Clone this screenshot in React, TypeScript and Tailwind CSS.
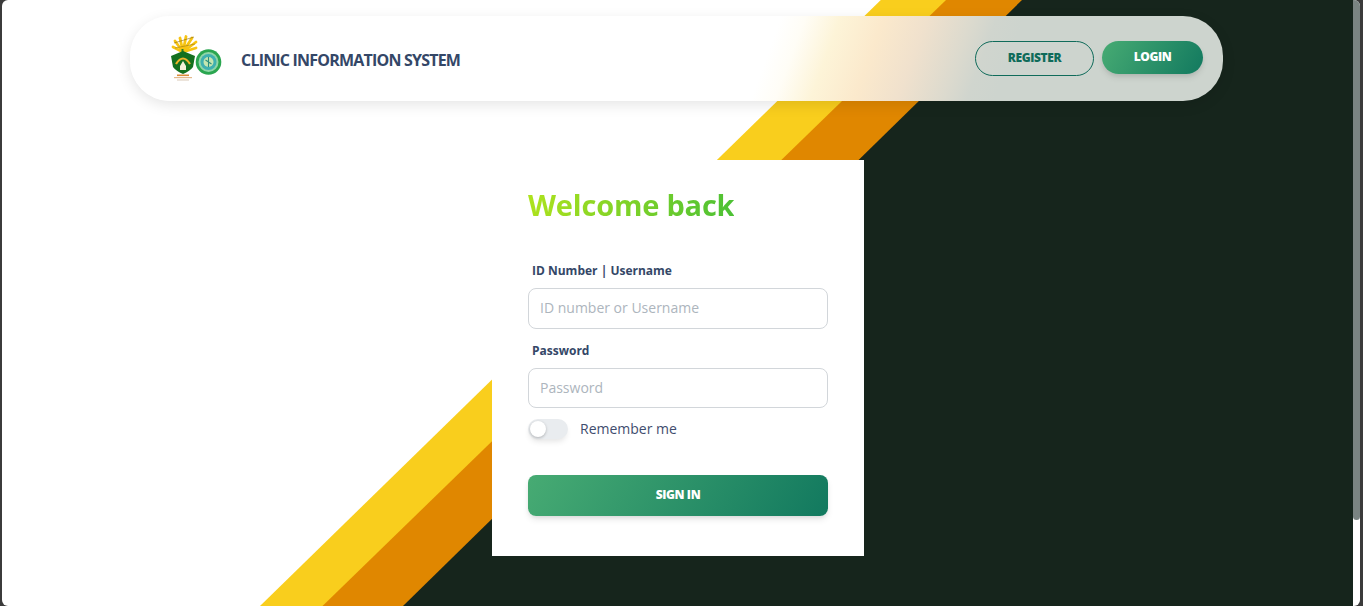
import React from "react";

const font = { fontFamily: '"Open Sans", "Noto Sans", sans-serif' };

const Logo = () => (
  <svg width="54" height="48" viewBox="0 0 54 48" className="shrink-0 blur-[0.3px]">
    {/* sun rays */}
    <g stroke="#f7c413" strokeWidth="2.8" strokeLinecap="round">
      <path d="M13 17 L3 12" />
      <path d="M13 17 L5 6" />
      <path d="M13 17 L10 3" />
      <path d="M13 17 L16 1.5" />
      <path d="M13 17 L22 3" />
      <path d="M13 17 L26 7" />
      <path d="M13 17 L26 13" />
    </g>
    <path d="M4 8 L24 2" stroke="#8a6a10" strokeWidth="0.6" />
    <path d="M5 13 L25 9" stroke="#8a6a10" strokeWidth="0.5" />
    <path d="M12.5 14 L12.5 20" stroke="#2f7d24" strokeWidth="2" />
    {/* shield */}
    <path d="M1 21 L13 16 L25 21 L23 32 Q20 36 13 39 Q6 36 3 32 Z" fill="#14701f" />
    <path d="M6 29 Q13 18 20 29" fill="none" stroke="#f0b429" strokeWidth="2.2" />
    <path d="M10 31 L13 26 L16 31 L16 35 L10 35 Z" fill="#f5f0d8" />
    {/* motto */}
    <rect x="7" y="39.5" width="12" height="1.6" fill="#d98b3a" />
    <rect x="4" y="42" width="18" height="1.2" fill="#e3b98c" />
    <rect x="7" y="44.5" width="12" height="1" fill="#d9c9b8" />
    {/* seal */}
    <circle cx="38.5" cy="27" r="12.8" fill="#2aa650" />
    <circle cx="38.5" cy="27" r="10" fill="#8fd6a8" />
    <circle cx="38.5" cy="27" r="8" fill="#3fb0b0" />
    <circle cx="38.5" cy="27" r="5" fill="#c4e6b0" />
    <path d="M38.5 22 L38.5 32 M35.5 25 L41.5 29" stroke="#2c8f7e" strokeWidth="1.1" />
  </svg>
);

const inputClass =
  "block w-full rounded-lg border border-[#d2d6da] bg-white px-[11px] pb-[2px] text-sm text-[#495057] outline-none placeholder:text-[#adb5bd]";
const labelClass = "ml-1 block text-xs font-bold leading-5 text-[#344767]";
const gradient = "bg-[linear-gradient(120deg,#47ab73,#12795f)]";
const softShadow = "shadow-[0_4px_7px_-1px_rgba(0,0,0,0.11),0_2px_4px_-1px_rgba(0,0,0,0.07)]";

export default function App() {
  return (
    <div className="h-screen overflow-hidden bg-[#3b3b3b] pl-[2px] pr-[3px]" style={font}>
      <div className="flex h-full overflow-hidden rounded-[6px]">
        <div className="relative flex flex-1 flex-col bg-white">
          {/* diagonal stripes behind everything */}
          <svg className="absolute inset-0" width="1351" height="606" viewBox="2 0 1351 606">
            <polygon points="880.8,0 260,606 1353,606 1353,0" fill="#f9ce1d" />
            <polygon points="946,0 322.5,606 1353,606 1353,0" fill="#e08700" />
            <polygon points="1022,0 403,606 1353,606 1353,0" fill="#16251c" />
          </svg>

          {/* frosted look of the nav, stops read off the screenshot */}
          <header className="relative ml-[128px] mt-4 flex h-[85px] w-[1093px] items-center rounded-[40px] bg-[linear-gradient(110deg,#fff_612px,#fffdf6_635px,#fdf4d8_668px,#fbe9cc_709px,#f0e1cd_750px,#dcdace_792px,#d0d5ce_815px,#cdd4ce_841px)] pl-[40px] pr-5 shadow-[0_4px_14px_0_rgba(0,0,0,0.1)]">
            <Logo />
            <span className="ml-[17px] pt-[2px] text-base font-bold tracking-[-0.8px] text-[#344767]">
              CLINIC INFORMATION SYSTEM
            </span>
            <div className="ml-auto flex items-start gap-2">
              <button className="h-[35px] w-[119px] rounded-full border border-[#0f6b5a] pb-[2px] text-xs font-extrabold tracking-[-0.4px] text-[#0f6b5a]">
                REGISTER
              </button>
              <button
                className={`h-[33px] w-[101px] rounded-full pb-[2px] text-xs font-extrabold tracking-[-0.4px] text-white ${softShadow} ${gradient}`}
              >
                LOGIN
              </button>
            </div>
          </header>

          <main className="relative ml-[490px] mt-[59px] h-[396px] w-[372px] bg-white px-9 pt-[24px]">
            <h1 className="w-fit bg-[linear-gradient(100deg,#afe31d,#4bc035)] bg-clip-text text-[29px] font-bold leading-[42px] tracking-[-0.2px] text-transparent">
              Welcome back
            </h1>
            <form className="mt-[35px]">
              <label className={labelClass}>ID Number | Username</label>
              <input className={`${inputClass} mt-[7px] h-[41px]`} placeholder="ID number or Username" />
              <label className={`${labelClass} mt-3`}>Password</label>
              <input className={`${inputClass} mt-[7px] h-[40px]`} placeholder="Password" type="password" />
              <div className="mt-[11px] flex h-5 items-center">
                <span className="flex h-5 w-10 items-center rounded-full bg-[#e9ecef] px-0.5 shadow-[0_4px_6px_-2px_rgba(0,0,0,0.12)]">
                  <span className="size-4 rounded-full bg-white shadow-[0_1px_3px_rgba(0,0,0,0.25)]" />
                </span>
                <span className="ml-3 text-sm text-[#3f4d6e]">Remember me</span>
              </div>
              <button
                type="button"
                className={`mt-9 block h-[41px] w-full rounded-lg pb-[2px] text-xs font-extrabold tracking-[-0.4px] text-white ${softShadow} ${gradient}`}
              >
                SIGN IN
              </button>
            </form>
          </main>
        </div>

        {/* scrollbar */}
        <div className="w-[7px] shrink-0 bg-white">
          <div className="h-[520px] rounded-b-[4px] bg-[#7a8482]" />
        </div>
      </div>
    </div>
  );
}
